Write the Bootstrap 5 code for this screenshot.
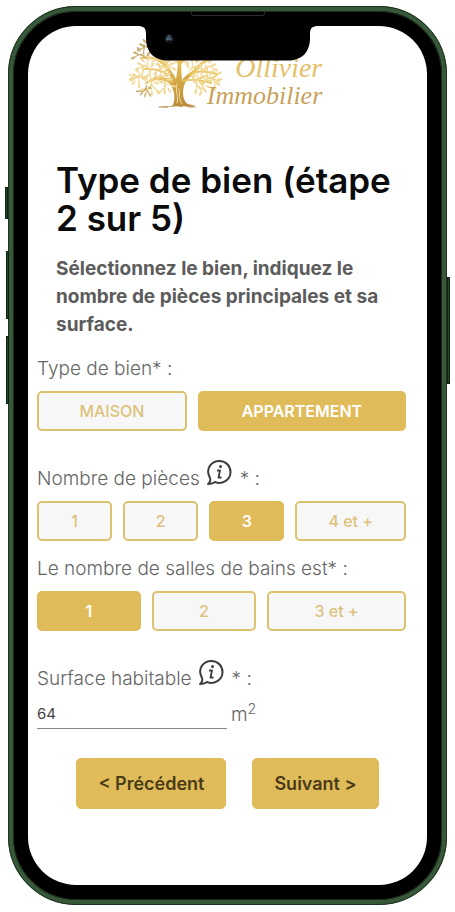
<!DOCTYPE html>
<html lang="fr">
<head>
<meta charset="utf-8">
<meta name="viewport" content="width=device-width, initial-scale=1">
<title>Ollivier Immobilier – Type de bien</title>
<link href="https://cdn.jsdelivr.net/npm/bootstrap@5.3.0/dist/css/bootstrap.min.css" rel="stylesheet">
<style>
  :root { --gold: #dfbb59; --ink: #666; }
  body { font-family: Inter, "Open Sans", sans-serif; color: var(--ink); background: #fff; }
  .phone { margin: 6px 8px 7px; padding: 15px; background: #000; border: 5px solid #38583a; border-radius: 68px;
    box-shadow: inset 0 0 0 1px #1b2a1c; outline: 1px solid #1d331f; outline-offset: -1px; }
  .screen { background: #fff; border-radius: 48px; padding-bottom: 76px; overflow: hidden; }
  .side-key { position: absolute; width: 3px; background: #24482a; border: 1px solid #10200f; }
  .key-mute { left: -8px; top: 176px; height: 32px; }
  .key-up { left: -7px; top: 240px; height: 68px; }
  .key-down { left: -7px; top: 325px; height: 68px; }
  .key-power { right: -8px; top: 266px; height: 107px; }
  .notch { position: absolute; top: -1px; left: 50%; transform: translateX(-50%); }
  .speaker { position: absolute; top: 0; left: 50%; transform: translateX(-50%); width: 74px; height: 5px; border: 1px solid #2a2d2b; border-top: 0; border-radius: 0 0 3px 3px; }
  .brand { padding: 8px 4px 0 0; height: 88px; }
  .brand-name { font-family: "Liberation Serif", serif; font-style: italic; text-align: right; margin-left: -18px; padding-top: 20px; }
  .brand-name span { display: block; line-height: 28px; }
  .brand-first { font-size: 28px; color: #e3c067; }
  .brand-second { font-size: 26px; color: #c9a25a; }
  .intro { padding: 47px 16px 0 28px; }
  .intro h1 { font-size: 35px; line-height: 38px; font-weight: 600; color: #0b0b0b; margin-bottom: 18px; }
  .intro p { font-size: 19px; line-height: 28px; font-weight: 700; color: #5c5c5c; }
  .fields { padding: 0 21px 0 9px; }
  .field-label { font-size: 19px; line-height: 28px; font-weight: 300; color: var(--ink); }
  .with-icon { padding-top: 14px; }
  .info-icon { margin: 0 8px 6px 6px; }
  .choices { gap: 11px; margin: 8px 0 14px; }
  .choice { flex: 1 1 0; height: 40px; font-size: 16px; line-height: 20px; font-weight: 500; padding: 0;
    --bs-btn-color: #dcc27c; --bs-btn-bg: #f8f7f8; --bs-btn-border-color: #dcc16f; --bs-btn-border-width: 2px; --bs-btn-border-radius: 5px;
    --bs-btn-hover-color: #fff; --bs-btn-hover-bg: var(--gold); --bs-btn-hover-border-color: var(--gold);
    --bs-btn-active-color: #fff; --bs-btn-active-bg: var(--gold); --bs-btn-active-border-color: var(--gold); }
  .choice.active { font-weight: 600; }
  .span-wide { flex-grow: 1.4; }
  .span-third { flex-grow: 1.35; }
  .span-half { flex-grow: 1.5; }
  .area-box { width: 190px; border: 0; border-bottom: 1px solid #888; border-radius: 0; padding: 0 0 3px; height: 28px; font-size: 15px; color: #444; background: transparent; }
  .step { height: 51px; font-size: 18px; font-weight: 600; border-radius: 5px; padding: 0 21px;
    --bs-btn-color: #4a3b18; --bs-btn-bg: var(--gold); --bs-btn-border-color: var(--gold); --bs-btn-hover-bg: #d3ad48; }
  .steps { gap: 26px; padding-top: 29px; }
</style>
</head>
<body>
<main class="phone position-relative">
  <span class="side-key key-mute"></span><span class="side-key key-up"></span><span class="side-key key-down"></span><span class="side-key key-power"></span>
  <span class="speaker"></span>
  <div class="screen position-relative">
    <svg class="notch" width="182" height="36" viewBox="0 0 182 36" aria-hidden="true">
      <path d="M0 0V1C7 1 9 3 9 9V13C9 28 18 35.500 31 35.500H151C164 35.500 173 28 173 13V9C173 3 175 1 182 1V0Z" fill="#000"/>
      <circle cx="32" cy="14" r="5" fill="#0b0e12"/><circle cx="32" cy="11.500" r="1.800" fill="#40505f"/><circle cx="30.500" cy="14" r="1.800" fill="#4b6072"/><circle cx="33.500" cy="14" r="1.800" fill="#405466"/>
    </svg>

    <header class="brand d-flex justify-content-center">
      <svg width="96" height="78" viewBox="0 0 96 78" fill="none" stroke-linecap="round" role="img" aria-label="Arbre doré">
        <defs>
          <linearGradient id="gold" x1="0" y1="0" x2="0" y2="1"><stop offset="0" stop-color="#edc653"/><stop offset="1" stop-color="#b8893a"/></linearGradient>
          <g id="twig"><path d="M0 0q4-5 9-5M3-3q1-4 0-7M5-5q4 0 7 3" stroke-width="1"/><path d="M9-5q2-3 5-2-2 3-5 2ZM3-10q-2-3 0-5 2 2 0 5ZM12-2q3-1 4 2-3 1-4-2ZM0-3q-3-1-3-4 3 0 3 4ZM7-8q0-3 3-4 0 3-3 4Z" stroke-width=".6"/></g>
        </defs>
        <path d="M44 71C47 63 45 57 42 51C38 46 30 46 24 45L25 43C32 43 39 43 43 47C40 37 34 32 30 24L32 23C37 31 43 36 47 45C49 36 48 29 51 20L53 20C52 29 52 38 53 46C58 39 64 38 69 32L71 33C67 40 58 42 55 52C53 59 54 67 59 70L67 72C58 74 54 71 52 73C47 71 42 74 32 73C38 72 42 73 44 71Z" fill="url(#gold)"/>
        <path d="M48 69C50 63 46 59 48 50M53 70C49 65 51 60 50 55" stroke="#f6df9e" stroke-width="1"/>
        <path d="M30 73H39M60 73H66" stroke="#b4894b" stroke-width="1"/>
        <g stroke="#e8c25c" stroke-width="2"><path d="M43 48Q30 41 17 49M39 41Q30 34 14 35M33 29Q25 22 12 24M34 30Q35 16 26 9M51 32Q42 20 44 8M52 29Q61 20 63 12M54 47Q64 44 82 49M60 40Q70 35 88 40M65 37Q71 27 84 25"/></g>
        <g stroke="#f0d48a" fill="#f3dc9b">
          <use href="#twig" x="18" y="49"/><use href="#twig" x="28" y="46"/><use href="#twig" x="31" y="36"/><use href="#twig" x="65" y="48"/><use href="#twig" x="75" y="48"/><use href="#twig" x="60" y="37"/><use href="#twig" x="73" y="37"/><use href="#twig" x="44" y="30"/><use href="#twig" x="54" y="28"/><use href="#twig" x="22" y="29"/><use href="#twig" x="63" y="27"/><use href="#twig" x="34" y="22"/><use href="#twig" x="74" y="25"/>
          <use href="#twig" transform="translate(22 36) scale(-1 1)"/><use href="#twig" transform="translate(17 47) scale(-1 1)"/><use href="#twig" transform="translate(23 46) rotate(140)"/><use href="#twig" transform="translate(34 45) rotate(110)"/><use href="#twig" transform="translate(68 46) rotate(80)"/><use href="#twig" transform="translate(78 43) rotate(60)"/><use href="#twig" transform="translate(61 45) rotate(70)"/><use href="#twig" transform="translate(40 38) rotate(-70)"/><use href="#twig" transform="translate(13 39) rotate(180)"/>
        </g>
        <g stroke="#c5a76a" fill="#cdb176"><use href="#twig" transform="translate(18 25) scale(-1 1)"/><use href="#twig" transform="translate(24 17) scale(-1 1)"/><use href="#twig" transform="translate(18 51) rotate(150) scale(.8)"/></g>
      </svg>
      <div class="brand-name"><span class="brand-first">Ollivier</span><span class="brand-second">Immobilier</span></div>
    </header>

    <section class="intro">
      <h1>Type de bien (étape 2 sur 5)</h1>
      <p class="mb-3">Sélectionnez le bien, indiquez le nombre de pièces principales et sa surface.</p>
    </section>

    <form class="fields">
      <div class="field-label" id="kind">Type de bien* :</div>
      <div class="choices d-flex" role="group" aria-labelledby="kind">
        <button type="button" class="btn choice">MAISON</button>
        <button type="button" class="btn choice span-wide active">APPARTEMENT</button>
      </div>
      <div class="field-label with-icon d-flex align-items-end" id="rooms">Nombre de pièces
        <svg class="info-icon" width="26" height="28" viewBox="0 0 26 28" fill="none" stroke="#3f3f3f" stroke-width="2" stroke-linejoin="round" role="img" aria-label="Information"><path d="M4 19C-1 10 5 2 13.500 2C20 2 24.500 7 24.500 13C24.500 21 16 26 9 23Q6 25 2 25Q5 23 4 19Z"/><path d="M11 11.500H14L12.500 18.500H15.500" stroke-width="1.800"/><circle cx="14.500" cy="7.500" r="1.500" fill="#3f3f3f" stroke="none"/></svg>
        <span>* :</span></div>
      <div class="choices d-flex" role="group" aria-labelledby="rooms">
        <button type="button" class="btn choice">1</button>
        <button type="button" class="btn choice">2</button>
        <button type="button" class="btn choice active">3</button>
        <button type="button" class="btn choice span-half">4 et +</button>
      </div>
      <div class="field-label" id="baths">Le nombre de salles de bains est* :</div>
      <div class="choices d-flex" role="group" aria-labelledby="baths">
        <button type="button" class="btn choice active">1</button>
        <button type="button" class="btn choice">2</button>
        <button type="button" class="btn choice span-third">3 et +</button>
      </div>
      <label class="field-label with-icon d-flex align-items-end" for="area">Surface habitable
        <svg class="info-icon" width="26" height="28" viewBox="0 0 26 28" fill="none" stroke="#3f3f3f" stroke-width="2" stroke-linejoin="round" role="img" aria-label="Information"><path d="M4 19C-1 10 5 2 13.500 2C20 2 24.500 7 24.500 13C24.500 21 16 26 9 23Q6 25 2 25Q5 23 4 19Z"/><path d="M11 11.500H14L12.500 18.500H15.500" stroke-width="1.800"/><circle cx="14.500" cy="7.500" r="1.500" fill="#3f3f3f" stroke="none"/></svg>
        <span>* :</span></label>
      <div class="d-flex align-items-end pt-2">
        <input id="area" class="area-box" type="text" inputmode="numeric" value="64">
        <span class="field-label ms-1">m<sup>2</sup></span>
      </div>
    </form>
    <nav class="steps d-flex justify-content-center" aria-label="Étapes">
      <button type="button" class="btn step">&lt; Précédent</button>
      <button type="button" class="btn step">Suivant &gt;</button>
    </nav>
  </div>
</main>
<script src="https://cdn.jsdelivr.net/npm/bootstrap@5.3.0/dist/js/bootstrap.bundle.min.js"></script>
</body>
</html>
